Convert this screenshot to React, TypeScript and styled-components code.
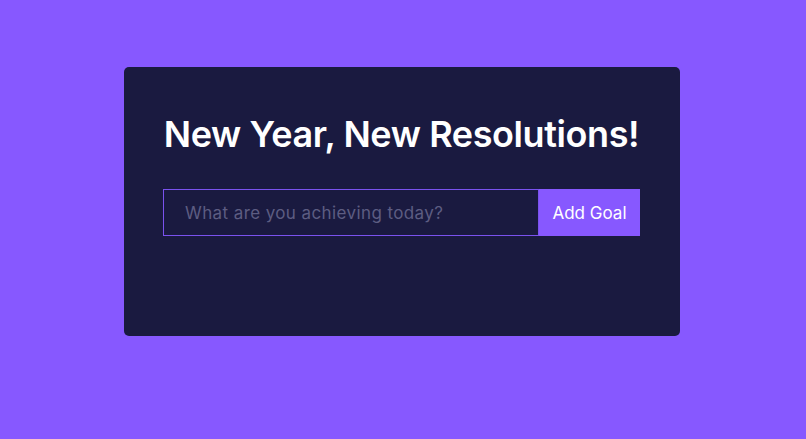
import styled, { createGlobalStyle } from "styled-components";

const GlobalStyle = createGlobalStyle`
  * {
    box-sizing: border-box;
  }

  body {
    margin: 0;
    background: #8758ff;
    font-family: "Inter", "Liberation Sans", sans-serif;
  }
`;

const Page = styled.div`
  display: flex;
  justify-content: center;
  padding: 67px 2px 0 0;
  height: 439px;
`;

const Card = styled.div`
  width: 556px;
  height: 269px;
  background: #1a1a40;
  border-radius: 5px;
  padding: 44px 40px 44px 39px;
`;

const Title = styled.h1`
  margin: 0 0 32px;
  color: #fff;
  font-size: 36px;
  font-weight: 600;
  line-height: 46px;
  text-align: center;
  letter-spacing: -0.4px;
`;

const Form = styled.form`
  display: flex;
  width: 100%;
`;

const Input = styled.input`
  flex: 1;
  height: 47px;
  padding: 0 21px;
  background: transparent;
  border: 1px solid #7a52ee;
  color: #fff;
  font-family: inherit;
  font-size: 17px;
  letter-spacing: 0.4px;
  outline: none;

  &::placeholder {
    color: #5d5d82;
  }
`;

const Button = styled.button`
  width: 101px;
  height: 47px;
  border: none;
  background: #8758ff;
  color: #fff;
  font-family: inherit;
  font-size: 17px;
  cursor: pointer;
`;

export default function App() {
  return (
    <>
      <GlobalStyle />
      <Page>
        <Card>
          <Title>New Year, New Resolutions!</Title>
          <Form onSubmit={(e) => e.preventDefault()}>
            <Input placeholder="What are you achieving today?" />
            <Button type="submit">Add Goal</Button>
          </Form>
        </Card>
      </Page>
    </>
  );
}
